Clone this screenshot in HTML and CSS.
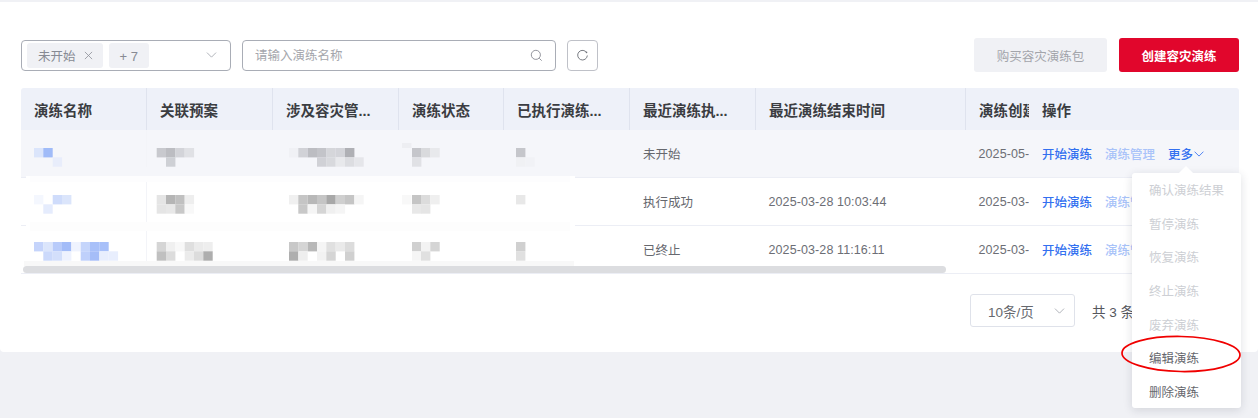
FILE: index.html
```html
<!DOCTYPE html>
<html lang="zh-CN">
<head>
<meta charset="utf-8">
<title>容灾演练</title>
<link rel="stylesheet" href="styles.css">
</head>
<body>
<main class="card">
  <div class="toolbar">
    <div class="select">
      <span class="tag">未开始<svg class="tag-x" viewBox="0 0 10 10"><path d="M1 1l8 8M9 1l-8 8"/></svg></span>
      <span class="tag tag-more">+ 7</span>
      <svg class="chev" viewBox="0 0 12 7"><path d="M.7.7L6 6l5.3-5.3"/></svg>
    </div>
    <div class="search">
      <span class="placeholder">请输入演练名称</span>
      <svg class="search-icon" viewBox="0 0 14 14"><circle cx="6.300" cy="6.300" r="4.900"/><path d="M10 10l2.600 2.600"/></svg>
    </div>
    <button class="icon-btn" aria-label="刷新"><svg viewBox="0 0 14 14"><path d="M11.600 4.200A5.200 5.200 0 1 0 12.200 7"/><circle cx="11.300" cy="3.600" r=".9" class="dot"/></svg></button>
    <div class="spacer"></div>
    <button class="btn btn-muted">购买容灾演练包</button>
    <button class="btn btn-primary">创建容灾演练</button>
  </div>

  <div class="table">
    <div class="row head">
      <div class="cell sep">演练名称</div>
      <div class="cell sep">关联预案</div>
      <div class="cell sep">涉及容灾管...</div>
      <div class="cell sep">演练状态</div>
      <div class="cell sep">已执行演练...</div>
      <div class="cell sep">最近演练执...</div>
      <div class="cell sep">最近演练结束时间</div>
      <div class="cell">演练创建</div>
      <div class="cell">操作</div>
    </div>
    <div class="row hover">
      <div class="cell"></div><div class="cell"></div><div class="cell"></div><div class="cell"></div><div class="cell"></div>
      <div class="cell">未开始</div>
      <div class="cell"></div>
      <div class="cell num">2025-05-</div>
      <div class="cell ops"><a class="link">开始演练</a><a class="link link-light">演练管理</a><a class="link more">更多<svg viewBox="0 0 12 7"><path d="M.7.7L6 6l5.3-5.3"/></svg></a></div>
    </div>
    <div class="row">
      <div class="cell"></div><div class="cell"></div><div class="cell"></div><div class="cell"></div><div class="cell"></div>
      <div class="cell">执行成功</div>
      <div class="cell num">2025-03-28 10:03:44</div>
      <div class="cell num">2025-03-</div>
      <div class="cell ops"><a class="link">开始演练</a><a class="link link-light">演练管理</a></div>
    </div>
    <div class="row">
      <div class="cell"></div><div class="cell"></div><div class="cell"></div><div class="cell"></div><div class="cell"></div>
      <div class="cell">已终止</div>
      <div class="cell num">2025-03-28 11:16:11</div>
      <div class="cell num">2025-03-</div>
      <div class="cell ops"><a class="link">开始演练</a><a class="link link-light">演练管理</a></div>
    </div>
    <svg class="mosaic" viewBox="0 0 560 146" aria-hidden="true">
      <rect x="5" y="46" width="549" height="90" fill="#fff"/>
      <path d="M125.500 0V136" stroke="#f3f4f8"/>
      <g transform="translate(-21 -130)">
        <rect x="21" y="167" width="554" height="9" fill="#f5f6fa"/>
        <rect x="30" y="176" width="540" height="6" fill="#fdfdfe"/>
        <rect x="30" y="222" width="540" height="9" fill="#fdfdfd"/>
        <rect x="24" y="261" width="550" height="5" fill="#f8f8f8"/>
        <rect x="34" y="148" width="9.400" height="9.400" fill="#dbe5fb"/><rect x="43.300" y="148" width="9.400" height="9.400" fill="#a0bbf8"/><rect x="52.700" y="157.300" width="9.400" height="9.400" fill="#e8edfb"/>
        <rect x="156.700" y="148" width="9.400" height="9.400" fill="#c8c9ce"/><rect x="166" y="148" width="9.400" height="9.400" fill="#bcbdc2"/><rect x="175.300" y="148" width="9.400" height="9.400" fill="#d3d4d9"/><rect x="184.700" y="148" width="9.400" height="9.400" fill="#e0e1e5"/><rect x="166" y="157.300" width="9.400" height="9.400" fill="#ced0d5"/>
        <rect x="289" y="148" width="9.400" height="9.400" fill="#f0f1f5"/><rect x="298.300" y="148" width="9.400" height="9.400" fill="#d1d2d7"/><rect x="307.700" y="148" width="9.400" height="9.400" fill="#bcbdc2"/><rect x="317" y="148" width="9.400" height="9.400" fill="#c3c4c9"/><rect x="326.300" y="148" width="9.400" height="9.400" fill="#d5d6da"/><rect x="335.700" y="148" width="9.400" height="9.400" fill="#d3d4d9"/><rect x="345" y="148" width="9.400" height="9.400" fill="#afb0b5"/>
        <rect x="317" y="157.300" width="9.400" height="9.400" fill="#d0d1d6"/><rect x="326.300" y="157.300" width="9.400" height="9.400" fill="#d8d9dd"/><rect x="335.700" y="157.300" width="9.400" height="9.400" fill="#e8e9ec"/><rect x="345" y="157.300" width="9.400" height="9.400" fill="#dcdde1"/><rect x="354.300" y="157.300" width="9.400" height="9.400" fill="#e5e6ea"/>
        <rect x="412" y="148" width="9.400" height="9.400" fill="#c5c6cb"/><rect x="421" y="148" width="9.400" height="9.400" fill="#d9dadd"/><rect x="430.300" y="148" width="9.400" height="9.400" fill="#e8e9ec"/><rect x="412" y="157.300" width="9.400" height="9.400" fill="#e0e1e5"/><rect x="402" y="143" width="9.400" height="5" fill="#edeef2"/>
        <rect x="516" y="148" width="9.400" height="9.400" fill="#c5c6cb"/><rect x="516" y="157.300" width="9.400" height="9.400" fill="#f0f1f4"/><rect x="525.300" y="157.300" width="9.400" height="9.400" fill="#f1f2f6"/>

        <rect x="34" y="195" width="9.400" height="9.400" fill="#f4f7fe"/><rect x="52.700" y="195" width="9.400" height="9.400" fill="#cfdcfb"/><rect x="62" y="195" width="9.400" height="9.400" fill="#dbe5fb"/><rect x="43.300" y="204.300" width="9.400" height="9.400" fill="#e5ecfd"/>
        <rect x="156.700" y="195" width="9.400" height="9.400" fill="#e5e5e5"/><rect x="166" y="195" width="9.400" height="9.400" fill="#b5b5b5"/><rect x="175.300" y="195" width="9.400" height="9.400" fill="#c0c0c0"/><rect x="184.700" y="195" width="9.400" height="9.400" fill="#eeeeee"/>
        <rect x="156.700" y="204.300" width="9.400" height="9.400" fill="#e5e5e5"/><rect x="166" y="204.300" width="9.400" height="9.400" fill="#e8e8e8"/><rect x="175.300" y="204.300" width="9.400" height="9.400" fill="#c8c8c8"/><rect x="184.700" y="204.300" width="9.400" height="9.400" fill="#f8f8f8"/>
        <rect x="289" y="195" width="9.400" height="9.400" fill="#f0f0f0"/><rect x="298.300" y="195" width="9.400" height="9.400" fill="#c5c5c5"/><rect x="307.700" y="195" width="9.400" height="9.400" fill="#b8b8b8"/><rect x="317" y="195" width="9.400" height="9.400" fill="#c5c5c5"/><rect x="326.300" y="195" width="9.400" height="9.400" fill="#a8a8a8"/><rect x="335.700" y="195" width="9.400" height="9.400" fill="#cfcfcf"/><rect x="345" y="195" width="9.400" height="9.400" fill="#c5c5c5"/><rect x="354.300" y="195" width="9.400" height="9.400" fill="#f5f5f5"/>
        <rect x="298.300" y="204.300" width="9.400" height="9.400" fill="#c8c8c8"/><rect x="307.700" y="204.300" width="9.400" height="9.400" fill="#f5f5f5"/><rect x="317" y="204.300" width="9.400" height="9.400" fill="#d5d5d5"/><rect x="326.300" y="204.300" width="9.400" height="9.400" fill="#f0f0f0"/><rect x="335.700" y="204.300" width="9.400" height="9.400" fill="#f5f5f5"/>
        <rect x="402" y="195" width="9.400" height="9.400" fill="#f8f8f8"/><rect x="412" y="195" width="9.400" height="9.400" fill="#c5c5c5"/><rect x="421" y="195" width="9.400" height="9.400" fill="#dcdcdc"/><rect x="430.300" y="195" width="9.400" height="9.400" fill="#efefef"/><rect x="412" y="204.300" width="9.400" height="9.400" fill="#e8e8e8"/><rect x="421" y="204.300" width="9.400" height="9.400" fill="#e5e5e5"/>
        <rect x="516" y="195" width="9.400" height="9.400" fill="#e8e8e8"/>

        <rect x="34" y="242" width="9.400" height="9.400" fill="#c5d4fb"/><rect x="43.300" y="242" width="9.400" height="9.400" fill="#dbe5fb"/><rect x="52.700" y="242" width="9.400" height="9.400" fill="#b8cbfa"/><rect x="62" y="242" width="9.400" height="9.400" fill="#a3bcf8"/><rect x="71.300" y="242" width="9.400" height="9.400" fill="#eff3fe"/><rect x="80.700" y="242" width="9.400" height="9.400" fill="#c5d5fb"/><rect x="90" y="242" width="9.400" height="9.400" fill="#a8c0f9"/><rect x="99.300" y="242" width="9.400" height="9.400" fill="#a8c0f9"/>
        <rect x="43.300" y="251.300" width="9.400" height="9.400" fill="#cbd9fb"/><rect x="52.700" y="251.300" width="9.400" height="9.400" fill="#d3dffb"/><rect x="62" y="251.300" width="9.400" height="9.400" fill="#eef2fe"/><rect x="80.700" y="251.300" width="9.400" height="9.400" fill="#bfd0fb"/><rect x="90" y="251.300" width="9.400" height="9.400" fill="#a5bdf8"/><rect x="99.300" y="251.300" width="9.400" height="9.400" fill="#e8eefd"/><rect x="108.700" y="251.300" width="9.400" height="9.400" fill="#e8eefd"/>
        <rect x="156.700" y="242" width="9.400" height="9.400" fill="#d5d5d5"/><rect x="166" y="242" width="9.400" height="9.400" fill="#f0f0f0"/><rect x="175.300" y="242" width="9.400" height="9.400" fill="#f8f8f8"/><rect x="184.700" y="242" width="9.400" height="9.400" fill="#dfdfdf"/><rect x="194" y="242" width="9.400" height="9.400" fill="#ebebeb"/><rect x="203.300" y="242" width="9.400" height="9.400" fill="#eeeeee"/>
        <rect x="156.700" y="251.300" width="9.400" height="9.400" fill="#c0c0c0"/><rect x="166" y="251.300" width="9.400" height="9.400" fill="#dcdcdc"/><rect x="184.700" y="251.300" width="9.400" height="9.400" fill="#ebebeb"/><rect x="194" y="251.300" width="9.400" height="9.400" fill="#dcdcdc"/><rect x="203.300" y="251.300" width="9.400" height="9.400" fill="#aeaeae"/>
        <rect x="289" y="242" width="9.400" height="9.400" fill="#c8c8c8"/><rect x="298.300" y="242" width="9.400" height="9.400" fill="#d5d5d5"/><rect x="307.700" y="242" width="9.400" height="9.400" fill="#b8b8b8"/><rect x="317" y="242" width="9.400" height="9.400" fill="#f5f5f5"/><rect x="326.300" y="242" width="9.400" height="9.400" fill="#e0e0e0"/><rect x="335.700" y="242" width="9.400" height="9.400" fill="#eaeaea"/><rect x="345" y="242" width="9.400" height="9.400" fill="#dcdcdc"/>
        <rect x="289" y="251.300" width="9.400" height="9.400" fill="#aeaeae"/><rect x="298.300" y="251.300" width="9.400" height="9.400" fill="#eeeeee"/><rect x="317" y="251.300" width="9.400" height="9.400" fill="#f2f2f2"/><rect x="326.300" y="251.300" width="9.400" height="9.400" fill="#d5d5d5"/><rect x="345" y="251.300" width="9.400" height="9.400" fill="#d0d0d0"/>
        <rect x="412" y="242" width="9.400" height="9.400" fill="#d0d0d0"/><rect x="421" y="242" width="9.400" height="9.400" fill="#f3f3f3"/><rect x="430.300" y="242" width="9.400" height="9.400" fill="#d5d5d5"/><rect x="412" y="251.300" width="9.400" height="9.400" fill="#f5f5f5"/><rect x="421" y="251.300" width="9.400" height="9.400" fill="#e0e0e0"/>
        <rect x="516" y="242" width="9.400" height="9.400" fill="#d0d0d0"/><rect x="516" y="251.300" width="9.400" height="9.400" fill="#e0e0e0"/>
      </g>
    </svg>
    <div class="scrollbar"></div>
  </div>

  <div class="pager">
    <div class="page-size">10条/页<svg class="chev" viewBox="0 0 12 7"><path d="M.7.7L6 6l5.300-5.300"/></svg></div>
    <span class="total">共 3 条</span>
  </div>
</main>

<ul class="menu">
  <li class="off">确认演练结果</li>
  <li class="off">暂停演练</li>
  <li class="off">恢复演练</li>
  <li class="off">终止演练</li>
  <li class="off">废弃演练</li>
  <li>编辑演练</li>
  <li>删除演练</li>
</ul>
<svg class="circle" viewBox="0 0 124 42" aria-hidden="true"><ellipse cx="62" cy="21" rx="59" ry="17.500" transform="rotate(1 62 21)"/></svg>
</body>
</html>
```

FILE: styles.css
```css
* { box-sizing: border-box; }
html, body { margin: 0; height: 100%; }
body {
  position: relative;
  overflow: hidden;
  background: #f0f1f5;
  font-family: "Liberation Sans", "Noto Sans CJK SC", sans-serif;
  font-size: 12.5px;
  color: #595b62;
  padding-top: 2px;
}
svg { display: block; }
.card {
  height: 350px;
  background: #fff;
  border-radius: 0 0 4px 4px;
  padding: 36px 19px 0 21px;
}

/* toolbar */
.toolbar { display: flex; align-items: center; gap: 11px; height: 34px; }
.select, .search {
  height: 31px;
  border: 1px solid #a9adb6;
  border-radius: 4px;
  display: flex;
  align-items: center;
}
.select { width: 210px; padding: 0 13px 0 5px; gap: 6px; }
.tag {
  height: 25px;
  padding: 0 10px 0 11px;
  display: flex;
  align-items: center;
  gap: 8px;
  background: #f0f1f5;
  border-radius: 3px;
  color: #878a93;
}
.tag-more { padding: 2px 11px 0; font-size: 13px; }
.tag-x { width: 9px; height: 9px; fill: none; stroke: #8e9199; stroke-width: .9; }
.chev { width: 11px; height: 6px; fill: none; stroke: #a4a7ae; stroke-width: 1; margin-left: auto; }
.search { width: 314px; padding: 0 12px; justify-content: space-between; }
.placeholder { color: #a5a7ad; margin-top: -1px; }
.search-icon { width: 13px; height: 13px; fill: none; stroke: #8a8d95; stroke-width: 1; }
.icon-btn {
  width: 31px;
  height: 31px;
  padding: 0;
  background: #fff;
  border: 1px solid #bfc1c8;
  border-radius: 4px;
  display: flex;
  align-items: center;
  justify-content: center;
}
.icon-btn svg { width: 13px; height: 13px; fill: none; stroke: #6f727a; stroke-width: 1; }
.icon-btn .dot { fill: #6f727a; stroke: none; }
.spacer { flex: 1; }
.btn {
  height: 33.500px;
  padding: 0;
  border: 0;
  border-radius: 3px;
  font: inherit;
  font-size: 12.5px;
}
.btn-muted { width: 133px; background: #f0f1f5; color: #a3a5ab; }
.btn-primary { width: 120px; margin-left: 1px; background: #e1062c; color: #fff; font-weight: 700; }

/* table */
.table { position: relative; margin-top: 16px; height: 186px; }
.row {
  display: grid;
  grid-template-columns: 126px 126px 126px 105px 126px 126px 210px 63px 210px;
  height: 48px;
  border-bottom: 1px solid #eceef5;
}
.cell {
  position: relative;
  display: flex;
  align-items: center;
  padding-left: 13px;
  overflow: hidden;
  white-space: nowrap;
  color: #66686e;
}
.num { color: #6c6e75; padding-left: 12.500px; letter-spacing: .1px; }
.head {
  height: 42px;
  border: 0;
  background: #eef1f9;
  border-radius: 3px 3px 0 0;
}
.head .cell { font-size: 14.5px; font-weight: 700; color: #3b3d42; }
.sep { border-right: 1px solid #dfe3ee; }
.hover { background: #f5f6fa; }
.ops { gap: 13px; }
.link { color: #3370f0; font-weight: 500; }
.link-light { color: #a9c3f9; }
.more { display: flex; align-items: center; gap: 1px; }
.more svg { width: 10px; height: 6px; fill: none; stroke: #3370f0; stroke-width: 1; }
.mosaic { position: absolute; left: 0; top: 42px; width: 560px; height: 146px; overflow: visible; }
.scrollbar {
  position: absolute;
  left: 2px;
  top: 178px;
  width: 923px;
  height: 7px;
  border-radius: 4px;
  background: #dcdde0;
}

/* pager */
.pager {
  display: flex;
  align-items: center;
  gap: 17px;
  margin-top: 20px;
  padding-left: 949px;
  font-size: 13.5px;
}
.page-size {
  width: 105px;
  height: 33px;
  padding: 0 9px 0 17px;
  display: flex;
  align-items: center;
  border: 1px solid #dfe2ea;
  border-radius: 3px;
  color: #66686e;
}
.total { color: #55575d; white-space: nowrap; }

/* dropdown */
.menu {
  position: absolute;
  left: 1132px;
  top: 173px;
  width: 109px;
  height: 235px;
  margin: 0;
  padding: 0;
  list-style: none;
  background: #fff;
  border-radius: 3px;
  box-shadow: 0 2px 10px rgba(30, 35, 60, .14);
}
.menu::before {
  content: "";
  position: absolute;
  left: 49px;
  top: -5px;
  width: 10px;
  height: 10px;
  background: #fff;
  transform: rotate(45deg);
}
.menu li {
  position: relative;
  height: 33.600px;
  padding-left: 17px;
  display: flex;
  align-items: center;
  color: #66686e;
}
.menu li.off { color: #cdcfd4; }
.circle {
  position: absolute;
  left: 1119px;
  top: 333px;
  width: 124px;
  height: 42px;
  fill: none;
  stroke: #f00000;
  stroke-width: 1.700;
}
```
